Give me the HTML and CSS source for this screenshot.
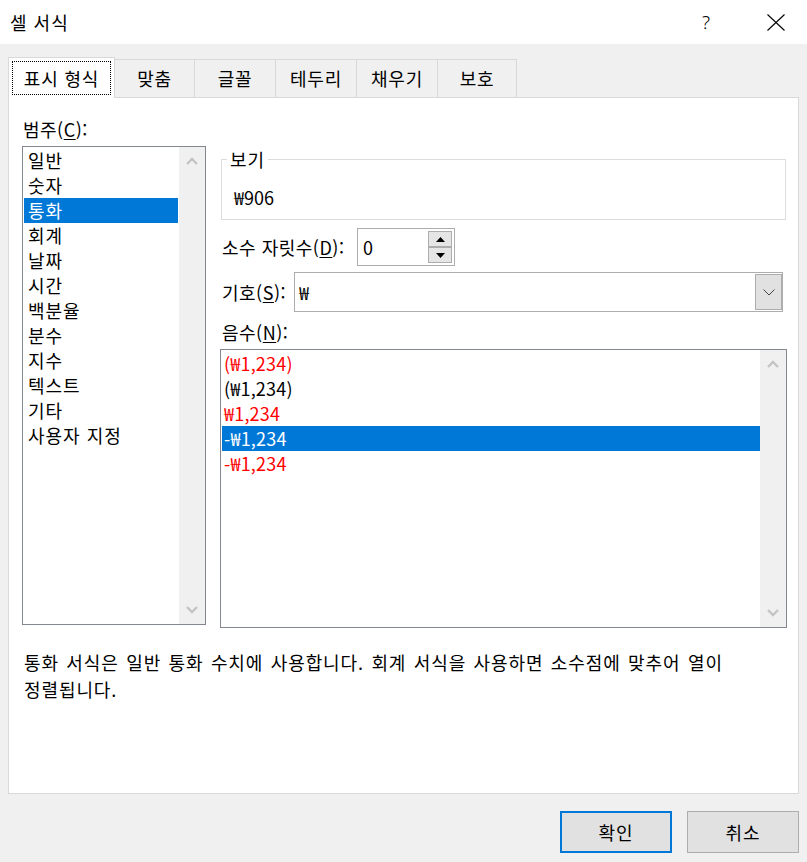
FILE: index.html
```html
<!DOCTYPE html>
<html lang="ko">
<head>
<meta charset="utf-8">
<title>셀 서식</title>
<link rel="stylesheet" href="styles.css">
</head>
<body>
<div class="titlebar">
  <div class="title">셀 서식</div>
  <div class="caption">
    <span class="cap-btn help">?</span>
    <span class="cap-btn close"><svg width="18" height="17" viewBox="0 0 18 17"><path d="M0.5 0.5L17.5 16.5M17.5 0.5L0.5 16.5" stroke="#000" stroke-width="1.1" fill="none"/></svg></span>
  </div>
</div>
<div class="tabs">
  <div class="tab active"><span class="focus">표시 형식</span></div>
  <div class="tab t2">맞춤</div>
  <div class="tab">글꼴</div>
  <div class="tab">테두리</div>
  <div class="tab">채우기</div>
  <div class="tab t6">보호</div>
</div>
<div class="panel">
  <div class="main">
    <div class="col-left">
      <div class="lbl cat-lbl">범주(<u>C</u>):</div>
      <div class="listbox cat-list">
        <div class="items">
          <div class="item">일반</div>
          <div class="item">숫자</div>
          <div class="item sel">통화</div>
          <div class="item">회계</div>
          <div class="item">날짜</div>
          <div class="item">시간</div>
          <div class="item">백분율</div>
          <div class="item">분수</div>
          <div class="item">지수</div>
          <div class="item">텍스트</div>
          <div class="item">기타</div>
          <div class="item">사용자 지정</div>
        </div>
        <div class="scrollbar">
          <div class="arrow"><svg width="12" height="8" viewBox="0 0 12 8"><path d="M1 7L6 2L11 7" stroke="#c4c4c4" stroke-width="2.4" fill="none"/></svg></div>
          <div class="arrow"><svg width="12" height="8" viewBox="0 0 12 8"><path d="M1 1L6 6L11 1" stroke="#c4c4c4" stroke-width="2.4" fill="none"/></svg></div>
        </div>
      </div>
    </div>
    <div class="col-right">
      <fieldset class="sample">
        <legend>보기</legend>
        <div class="sample-value">₩906</div>
      </fieldset>
      <div class="row spin-row">
        <label class="lbl w-dec">소수 자릿수(<u>D</u>):</label>
        <div class="spin">
          <span class="spin-val">0</span>
          <div class="spin-btns">
            <div class="spin-btn"><svg width="9" height="5" viewBox="0 0 9 5"><path d="M0 5L4.5 0L9 5Z" fill="#000"/></svg></div>
            <div class="spin-btn"><svg width="9" height="5" viewBox="0 0 9 5"><path d="M0 0L4.5 5L9 0Z" fill="#000"/></svg></div>
          </div>
        </div>
      </div>
      <div class="row combo-row">
        <label class="lbl w-sym">기호(<u>S</u>):</label>
        <div class="combo">
          <span class="combo-val">₩</span>
          <div class="combo-btn"><svg width="12" height="7" viewBox="0 0 12 7"><path d="M0.5 0.5L6 6L11.5 0.5" stroke="#444" stroke-width="1" fill="none"/></svg></div>
        </div>
      </div>
      <div class="lbl neg-lbl">음수(<u>N</u>):</div>
      <div class="listbox neg-list">
        <div class="items">
          <div class="item red">(₩1,234)</div>
          <div class="item">(₩1,234)</div>
          <div class="item red">₩1,234</div>
          <div class="item sel">-₩1,234</div>
          <div class="item red">-₩1,234</div>
        </div>
        <div class="scrollbar">
          <div class="arrow"><svg width="12" height="8" viewBox="0 0 12 8"><path d="M1 7L6 2L11 7" stroke="#c4c4c4" stroke-width="2.4" fill="none"/></svg></div>
          <div class="arrow"><svg width="12" height="8" viewBox="0 0 12 8"><path d="M1 1L6 6L11 1" stroke="#c4c4c4" stroke-width="2.4" fill="none"/></svg></div>
        </div>
      </div>
    </div>
  </div>
  <p class="desc">통화 서식은 일반 통화 수치에 사용합니다. 회계 서식을 사용하면 소수점에 맞추어 열이 정렬됩니다.</p>
</div>
<div class="footer">
  <button class="btn default">확인</button>
  <button class="btn">취소</button>
</div>
</body>
</html>
```
FILE: styles.css
```css
* { box-sizing: border-box; }
html, body { margin: 0; padding: 0; }
body {
  width: 807px;
  height: 862px;
  overflow: hidden;
  background: #f0f0f0;
  color: #000;
  font-family: "Noto Sans CJK KR", "Noto Sans", sans-serif;
  font-size: 18px;
}
u { text-decoration: underline; text-underline-offset: 2px; }

.titlebar {
  height: 44px;
  background: #fff;
  display: flex;
  align-items: center;
  justify-content: space-between;
}
.title { padding-left: 10px; line-height: 25px; letter-spacing: 1px; }
.caption { display: flex; gap: 24px; padding-right: 8px; }
.cap-btn {
  width: 46px;
  height: 25px;
  display: flex;
  align-items: center;
  justify-content: center;
}
.help { font-family: "Noto Sans", sans-serif; font-weight: 300; font-size: 19px; }

.tabs {
  display: flex;
  align-items: flex-end;
  height: 40px;
  margin-top: 13px;
  padding-left: 8px;
}
.tab {
  width: 82px;
  height: 38px;
  margin-left: -1px;
  border: 1px solid #d9d9d9;
  border-bottom: none;
  background: #f0f0f0;
  display: flex;
  align-items: center;
  justify-content: center;
  line-height: 25px;
  letter-spacing: 0.8px;
}
.tab.t2 { width: 81px; }
.tab.t6 { width: 80px; }
.tab.active {
  position: relative;
  z-index: 1;
  width: 107px;
  height: 41px;
  margin-left: 0;
  margin-bottom: -1px;
  background: #fff;
  padding: 3px;
  align-items: flex-start;
}
.focus {
  width: 99px;
  height: 34px;
  border: 1px dotted #000;
  display: flex;
  align-items: center;
  justify-content: center;
}

.panel {
  margin: 0 8px;
  height: 697px;
  background: #fff;
  border: 1px solid #d9d9d9;
}
.main {
  display: flex;
  align-items: flex-start;
  gap: 14px;
  padding-left: 13px;
}
.col-left { width: 184px; }
.col-right { width: 567px; }
.lbl { height: 25px; line-height: 25px; white-space: nowrap; letter-spacing: 0.5px; }
.cat-lbl { margin-top: 19px; margin-bottom: 4px; padding-left: 1px; }

.listbox {
  display: flex;
  border: 1px solid #828790;
  background: #fff;
}
.cat-list { height: 479px; }
.neg-list { height: 279px; }
.items { flex: 1; padding: 1px 1px 0 1px; }
.neg-list .items { padding-right: 0; }
.item { height: 25px; line-height: 25px; padding-left: 4px; white-space: nowrap; }
.cat-list .item { letter-spacing: 1px; }
.neg-list .item { padding-left: 2px; letter-spacing: 0.2px; }
.item.red { color: #ff0000; }
.item.sel { background: #0078d7; color: #fff; }
.scrollbar {
  width: 26px;
  background: #f0f0f0;
  display: flex;
  flex-direction: column;
  justify-content: space-between;
}
.arrow {
  height: 28px;
  display: flex;
  align-items: center;
  justify-content: center;
}

.sample {
  margin: 49px 1px 0;
  padding: 14px 0 9px 5px;
  border: 1px solid #dcdcdc;
  min-width: 0;
}
.sample legend { padding: 0 3px; height: 24px; line-height: 24px; letter-spacing: 1px; }
.sample-value { line-height: 25px; padding-left: 7px; }

.row { display: flex; align-items: center; }
.spin-row { margin-top: 8px; height: 38px; }
.w-dec { width: 137px; padding-left: 2px; }
.spin {
  width: 98px;
  height: 38px;
  border: 1px solid #adadad;
  background: #fff;
  display: flex;
  align-items: center;
  padding: 2px 2px 2px 5px;
}
.spin-val { flex: 1; line-height: 25px; }
.spin-btns {
  width: 24px;
  align-self: stretch;
  display: flex;
  flex-direction: column;
}
.spin-btn {
  height: 16px;
  background: #e5e5e5;
  border: 1px solid #adadad;
  display: flex;
  align-items: center;
  justify-content: center;
}

.combo-row { margin-top: 6px; height: 40px; }
.w-sym { width: 74px; padding-left: 2px; }
.combo {
  width: 489px;
  height: 40px;
  border: 1px solid #adadad;
  background: #fff;
  display: flex;
  align-items: center;
  padding: 1px 0 1px 4px;
}
.combo-val { flex: 1; line-height: 25px; }
.combo-btn {
  width: 27px;
  align-self: stretch;
  background: #e1e1e1;
  border: 1px solid #adadad;
  display: flex;
  align-items: center;
  justify-content: center;
}

.neg-lbl { margin-top: 8px; margin-bottom: 4px; padding-left: 2px; }

.desc {
  margin: 21px 0 0 15px;
  width: 745px;
  line-height: 27px;
  letter-spacing: 0.9px;
  word-spacing: 1.5px;
  word-break: keep-all;
}

.footer {
  display: flex;
  justify-content: flex-end;
  gap: 15px;
  padding: 17px 8px 0;
}
.btn {
  width: 112px;
  height: 42px;
  padding: 0;
  background: #e1e1e1;
  border: 1px solid #adadad;
  color: #000;
  font: inherit;
  letter-spacing: 1px;
}
.btn.default { border: 2px solid #0078d7; }
```
